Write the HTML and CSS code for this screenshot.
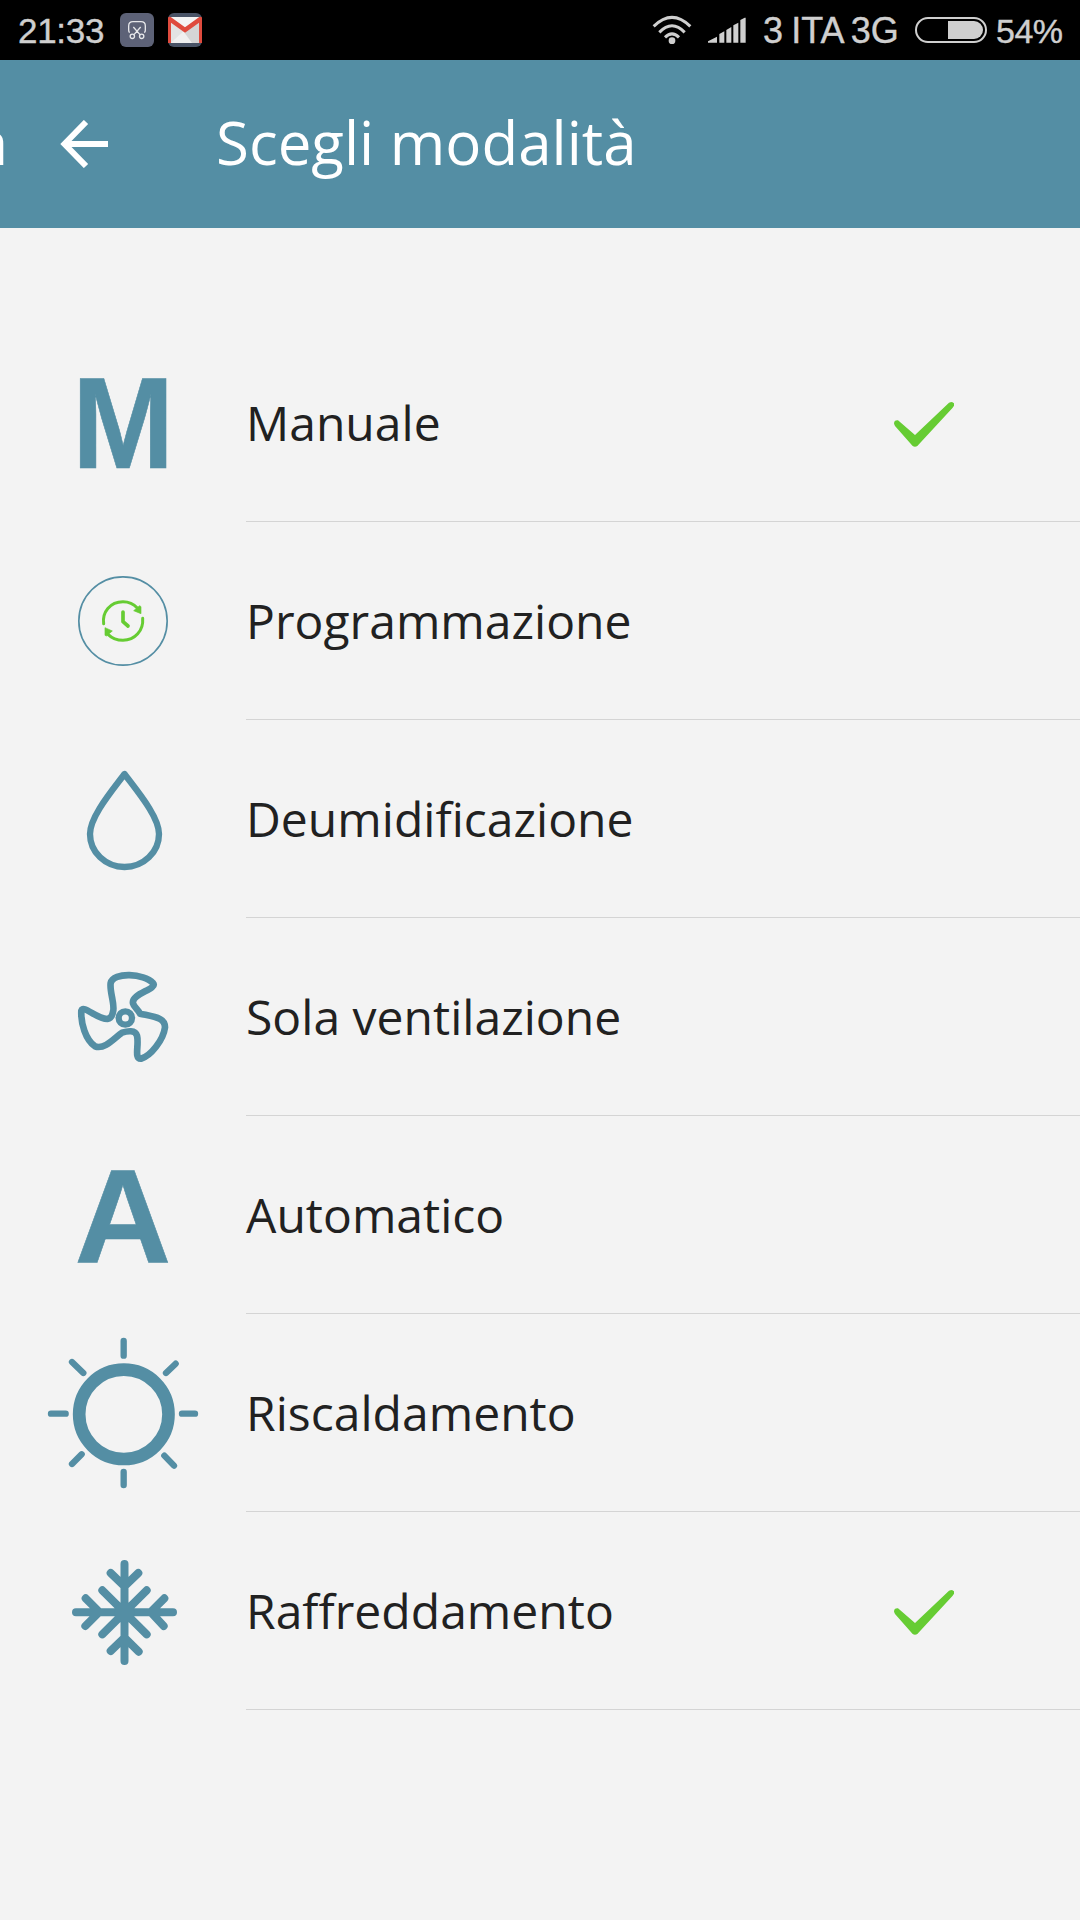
FILE: index.html
```html
<!DOCTYPE html>
<html lang="it">
<head>
<meta charset="utf-8">
<title>Scegli modalità</title>
<link rel="stylesheet" href="styles.css">
</head>
<body>
<div class="status">
  <span class="time">21:33</span>
  <svg class="app" width="34" height="34" viewBox="0 0 102 102"><rect width="102" height="102" rx="18" fill="#5d6277"/><g fill="none" stroke="#e6e7ea" stroke-width="4"><path d="M29 59Q26 57 26 52V39Q26 26 39 26H63Q76 26 76 39V52Q76 57 73 59M40 42L60 65M62 42L42 65"/><circle cx="37" cy="70" r="6.500"/><circle cx="65" cy="70" r="6.500"/></g></svg>
  <svg class="app" width="34" height="34" viewBox="0 0 102 102"><rect width="102" height="102" rx="18" fill="#495366"/><path d="M4 12H98V90H4Z" fill="#e3e3e3"/><path d="M8 90L50 52L94 90Z" fill="#f0f0f0"/><path d="M50 60L94 22V90H72Z" fill="#d5d5d5"/><path d="M10 12H92L51 46Z" fill="#f4f4f4"/><path d="M0 14Q2 10 8 12L51 43L94 12Q100 10 102 14V90H93V29L51 59L9 29V90H0Z" fill="#df4b3e"/></svg>
  <span class="space"></span>
  <svg class="wifi" width="40" height="30" viewBox="0 0 120 90"><g fill="none" stroke="#cfcfcf" stroke-width="9"><path d="M5 34Q60-20 115 34"/><path d="M22 52Q60 13 98 52"/><path d="M39 67Q60 46 81 67"/></g><circle cx="60" cy="77" r="10" fill="#cfcfcf"/></svg>
  <svg class="signal" width="38" height="26" viewBox="0 0 114 78"><path fill="#cfcfcf" d="M0 77V73L27 59V77ZM34 77V51L49 43V77ZM55 77V39L70 30V77ZM76 77V25L91 17V77ZM97 77V9L110 2H113V77Z"/></svg>
  <span class="carrier">3 ITA 3G</span>
  <svg class="battery" width="73" height="26" viewBox="0 0 73 26"><rect x="1" y="1" width="70" height="24" rx="12" fill="none" stroke="#cfcfcf" stroke-width="2"/><path d="M33 4H59A9 9 0 0 1 59 22H33Z" fill="#cfcfcf"/></svg>
  <span class="percent">54%</span>
</div>

<header class="bar">
  <span class="previous">a</span>
  <svg class="back" width="48" height="48" viewBox="0 0 48 48"><path d="M48 24H6M26 2L4.500 24L26 46" fill="none" stroke="#fff" stroke-width="6"/></svg>
  <h1 class="title">Scegli modalità</h1>
</header>

<ul class="modes">
  <li class="mode">
    <svg class="icon" viewBox="0 0 246 198"><text class="letter" transform="translate(123 144) scale(.94 1)" font-size="130.500">M</text></svg>
    <div class="body"><span class="label">Manuale</span>
      <svg class="check" viewBox="0 0 180 135"><path d="M0 65Q0 54 12 55L63 99L165 2Q169 0 174 0L180 4V11L176 17L70 132Q63 137 56 132L3 72Z"/></svg></div>
  </li>
  <li class="mode">
    <svg class="icon" viewBox="0 0 246 198"><g transform="translate(60 38) scale(.33333)"><circle class="line" cx="189" cy="183" r="132.500" stroke-width="5"/><g class="green" stroke-width="9"><path d="M131 191C126 157 150 125 189 125Q215 125 232 144M248 175C251 211 225 241 189 241Q162 241 144 223"/><path stroke-width="11" d="M189 156V185L204 198"/></g><path class="tip" d="M239 137L243 140V161L221 152ZM135 203L157 213L139 228L135 226Z"/></g></svg>
    <div class="body"><span class="label">Programmazione</span></div>
  </li>
  <li class="mode">
    <svg class="icon" viewBox="0 0 246 198"><g transform="translate(60 30) scale(.33333)"><path class="line" stroke-width="19" stroke-linejoin="bevel" d="M193.500 72C158 120 90 199 90 252A103.500 99 0 0 0 297 252C297 199 229 120 193.500 72Z"/></g></svg>
    <div class="body"><span class="label">Deumidificazione</span></div>
  </li>
  <li class="mode">
    <svg class="icon" viewBox="0 0 246 198"><g transform="translate(60 32) scale(.33333)"><path class="line" stroke-width="20" d="M159 185C166 165 148 125 152 99C160 65 252 70 279 99C294 118 213 130 219 160C222 172 236 180 240 191C285 201 315 203 315 232C310 270 272 318 243 326C221 327 238 285 231 257C226 239 202 243 186 248C165 262 135 300 105 289C77 270 62 220 64 182C70 163 110 207 142 207C153 205 157 198 159 185Z"/><circle class="line" cx="196" cy="204" r="20" stroke-width="19"/></g></svg>
    <div class="body"><span class="label">Sola ventilazione</span></div>
  </li>
  <li class="mode">
    <svg class="icon" viewBox="0 0 246 198"><text class="letter" transform="translate(123 147)" font-size="134">A</text></svg>
    <div class="body"><span class="label">Automatico</span></div>
  </li>
  <li class="mode">
    <svg class="icon" viewBox="0 0 246 198"><g transform="translate(30 6) scale(.33333)"><circle class="line" cx="281.500" cy="283" r="134" stroke-width="38"/><path class="line" stroke-width="19" d="M281 63V107M281 456V495M63 281H107M456 281H495M126 126L160 159M408 159L437 131M126 432L155 403M403 407L432 437"/></g></svg>
    <div class="body"><span class="label">Riscaldamento</span></div>
  </li>
  <li class="mode">
    <svg class="icon" viewBox="0 0 246 198"><g transform="translate(50 28) scale(.33333)"><path class="line" stroke-width="24" d="M223.500 72V363M78 216.500H369M157 151L290 283M290 151L157 283M182 99L223.500 139L265 99M182 333L223.500 293L266 335M107 175L148 216L106 258M343 175L302 216L341 258"/><circle class="core" cx="223.500" cy="217" r="30"/></g></svg>
    <div class="body"><span class="label">Raffreddamento</span>
      <svg class="check" viewBox="0 0 180 135"><path d="M0 65Q0 54 12 55L63 99L165 2Q169 0 174 0L180 4V11L176 17L70 132Q63 137 56 132L3 72Z"/></svg></div>
  </li>
</ul>
</body>
</html>
```
FILE: styles.css
```css
* { box-sizing: border-box; }
body {
  margin: 0;
  width: 1080px;
  height: 1920px;
  overflow: hidden;
  background: #f3f3f3;
  font-family: "Open Sans", sans-serif;
}
svg { display: block; flex: none; }

.status {
  display: flex;
  align-items: center;
  height: 60px;
  padding: 0 18px 0 18px;
  background: #000;
  color: #cfcfcf;
  font: 35px/60px "Liberation Sans", sans-serif;
  white-space: nowrap;
  -webkit-text-stroke: .4px #cfcfcf;
}
.time { width: 102px; padding-top: 2px; letter-spacing: -.3px; }
.app { margin-right: 14px; }
.space { flex: 1; }
.wifi { margin-right: 16px; }
.signal { margin-right: 17px; }
.carrier { width: 152px; padding-top: 2px; font-size: 36px; word-spacing: -1.500px; letter-spacing: -.1px; }
.battery { margin-right: 8px; }
.percent { width: 66px; padding-top: 2px; font-size: 34px; letter-spacing: -.5px; }

.bar {
  display: flex;
  align-items: center;
  height: 168px;
  background: #548ea4;
  color: #fff;
  overflow: hidden;
  font-size: 60px;
}
.previous {
  display: flex;
  justify-content: flex-end;
  width: 8px;
  margin-right: 52px;
  padding-bottom: 4px;
  overflow: hidden;
}
.title {
  margin: 0 0 0 108px;
  padding-bottom: 4px;
  font-size: 60px;
  font-weight: 400;
  white-space: nowrap;
}

.modes { margin: 0; padding: 96px 0 0; list-style: none; }
.mode { display: flex; height: 198px; }
.icon { width: 246px; height: 198px; }
.body {
  display: flex;
  flex: 1;
  align-items: center;
  justify-content: space-between;
  padding-right: 126px;
  border-bottom: 1px solid #d4d4d4;
}
.label { color: #212121; font-size: 48px; line-height: 64px; letter-spacing: .03px; white-space: nowrap; }
.check { width: 60px; height: 45px; margin-top: 3px; fill: #66cc33; }
.letter {
  fill: #548ea4;
  stroke: #548ea4;
  stroke-width: .6px;
  font-family: "Liberation Sans", sans-serif;
  font-weight: 700;
  text-anchor: middle;
}
.line { fill: none; stroke: #548ea4; stroke-linecap: round; stroke-linejoin: round; }
.core { fill: #548ea4; }
.green { fill: none; stroke: #66cc33; stroke-linecap: round; stroke-linejoin: round; }
.tip { fill: #66cc33; stroke: #66cc33; stroke-width: 2; }
```
